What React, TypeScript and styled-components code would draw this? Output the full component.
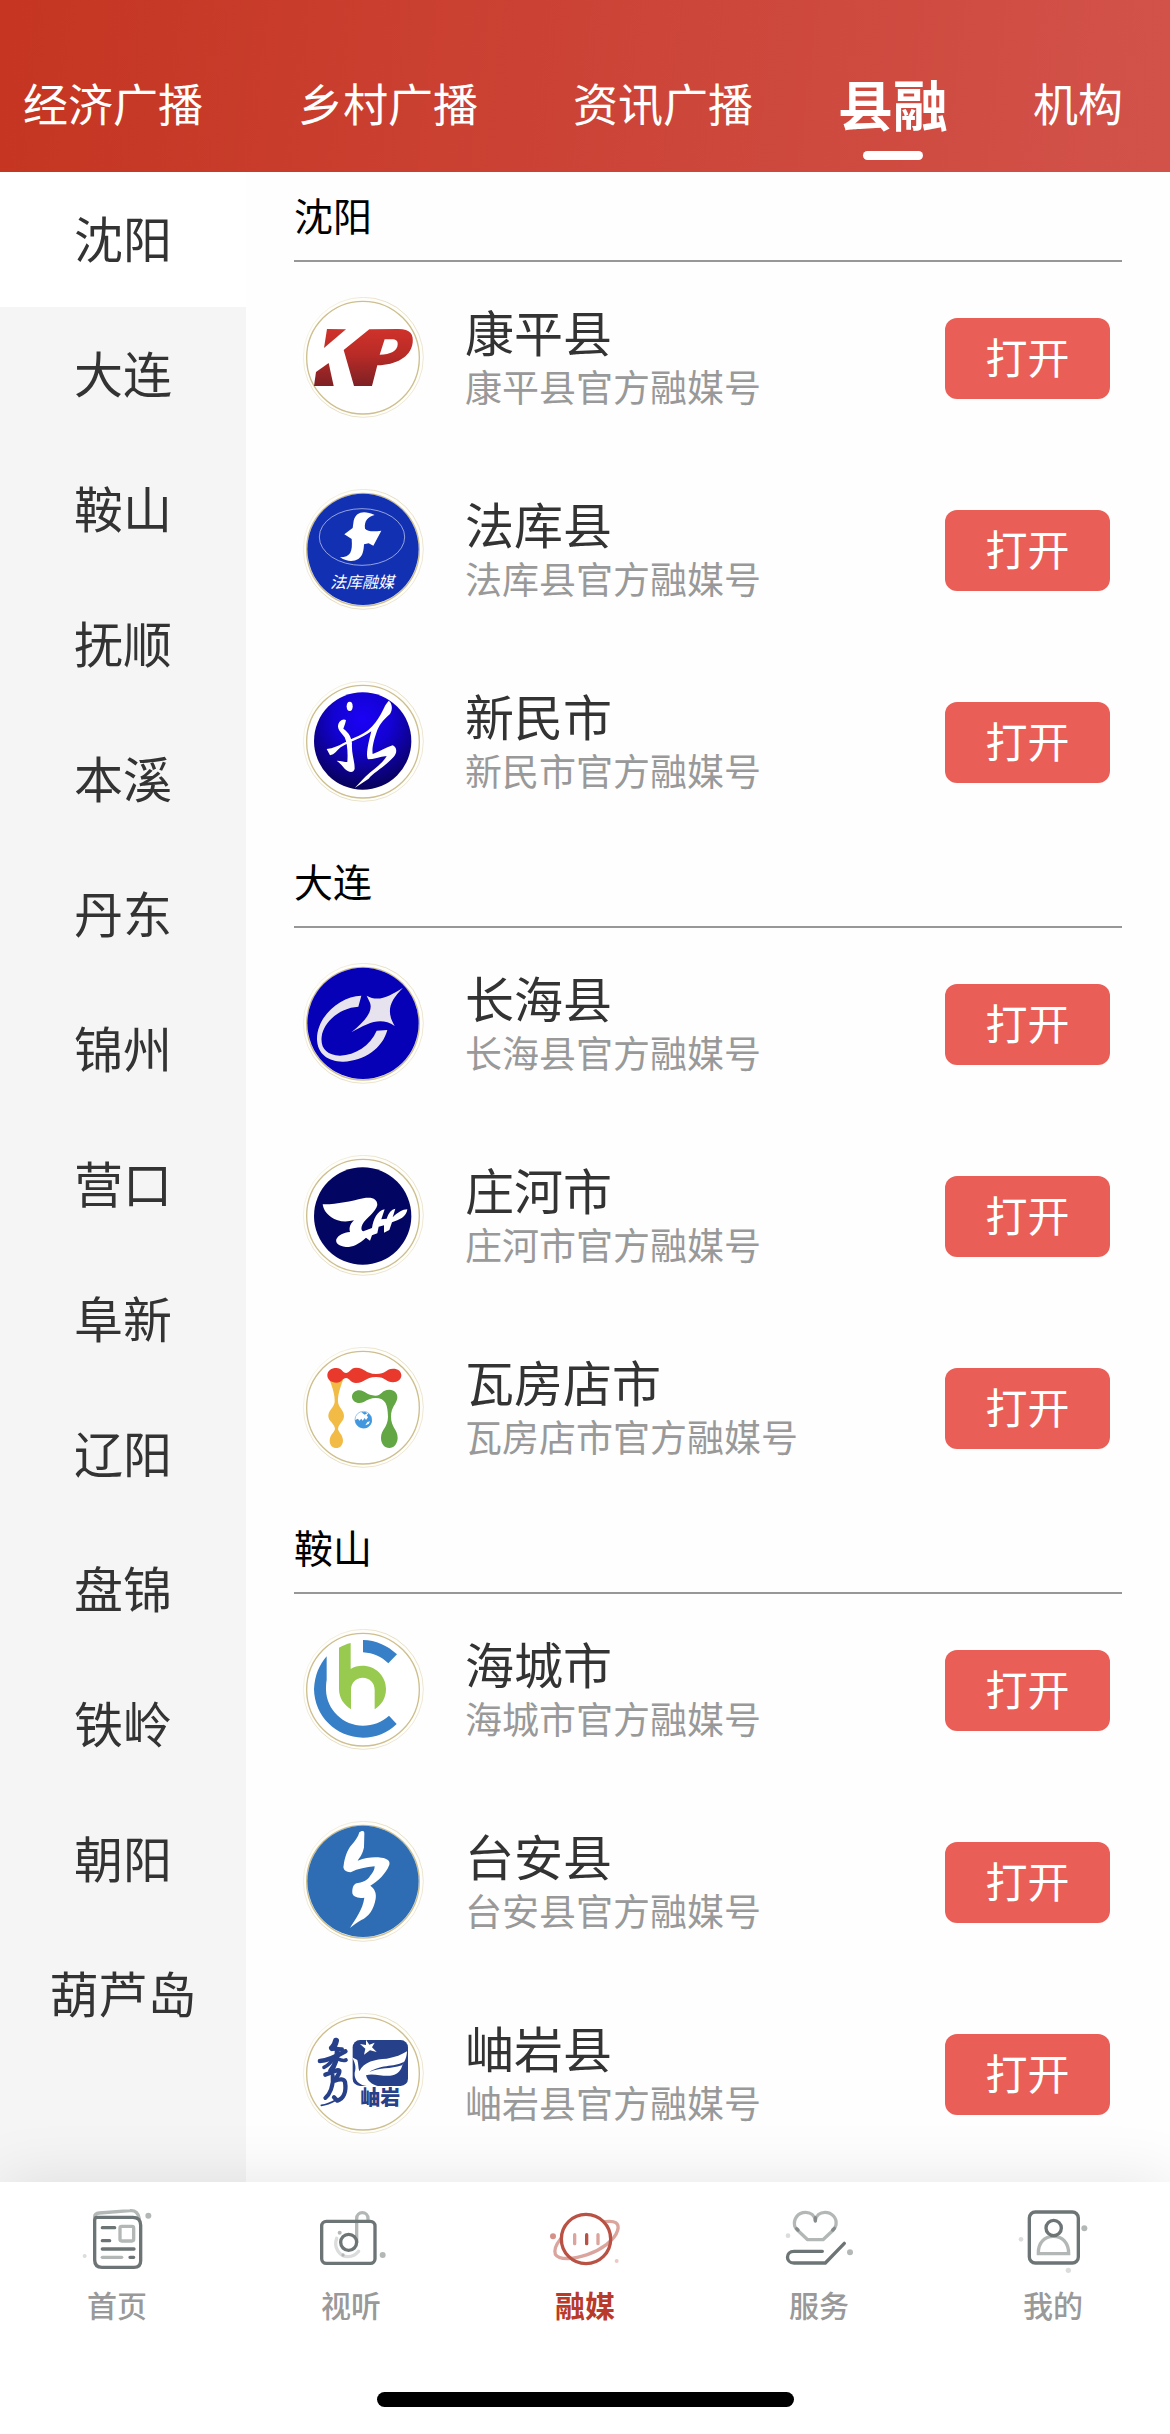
import React, { useState } from "react";
import styled, { createGlobalStyle, css } from "styled-components";

const GlobalStyle = createGlobalStyle`
  *, *::before, *::after { box-sizing: border-box; }
  body {
    margin: 0;
    background: #fefefe;
    color: #333;
    font-family: "Liberation Sans", "Noto Sans CJK SC", sans-serif;
  }
  button {
    margin: 0;
    padding: 0;
    border: 0;
    background: none;
    color: inherit;
    font: inherit;
    cursor: pointer;
  }
  ul { margin: 0; padding: 0; list-style: none; }
`;

const Screen = styled.div`
  display: flex;
  flex-direction: column;
  min-height: 100vh;
`;

const Header = styled.header`
  padding: 78px 23px 12px;
  background: linear-gradient(97deg, #c53521 0%, #cb4234 45%, #d2524a 100%);
`;

const TabList = styled.nav`
  display: flex;
  align-items: flex-start;
  gap: 95px;
  color: #fff;
`;

const Tab = styled.button<{ $active: boolean }>`
  display: flex;
  flex: none;
  flex-direction: column;
  align-items: center;
  height: 82px;
  font-size: 45px;
  line-height: 58px;
  white-space: nowrap;

  ${({ $active }) =>
    $active &&
    css`
      margin: 0 -10px;
      font-size: 55px;
      font-weight: 700;

      &::after {
        content: "";
        width: 60px;
        height: 9px;
        margin-top: 15px;
        border-radius: 5px;
        background: #fff;
      }
    `}
`;

const Body = styled.div`
  display: flex;
  flex: 1;
`;

const Sidebar = styled.nav`
  flex: none;
  width: 246px;
  background: #f5f5f5;
`;

const CityButton = styled.button<{ $active: boolean }>`
  display: block;
  width: 100%;
  height: 135px;
  padding-top: 2px;
  background: ${({ $active }) => ($active ? "#fff" : "transparent")};
  font-size: 49px;
  line-height: 56px;
  text-align: center;
`;

const Main = styled.main`
  flex: 1;
  min-width: 0;
  padding: 0 48px 12px;
`;

const SectionTitle = styled.h2`
  height: 90px;
  margin: 0;
  border-bottom: 2px solid #979797;
  color: #000;
  font-size: 39px;
  font-weight: 400;
  line-height: 92px;
`;

const Row = styled.li`
  display: flex;
  align-items: center;
  height: 192px;
  padding: 0 12px 0 8px;
`;

const Avatar = styled.svg`
  flex: none;
  width: 122px;
  height: 122px;
  margin-right: 41px;
`;

const RowText = styled.div`
  flex: 1;
  min-width: 0;
  padding-top: 8px;
`;

const Name = styled.div`
  font-size: 49px;
  line-height: 56px;
`;

const Description = styled.div`
  color: #999;
  font-size: 37px;
  line-height: 54px;
`;

const OpenButton = styled.button`
  flex: none;
  width: 165px;
  height: 81px;
  padding-top: 4px;
  border-radius: 12px;
  background: #e95f58;
  color: #fff;
  font-size: 42px;
  line-height: 56px;
`;

const BottomBar = styled.footer`
  position: relative;
  display: flex;
  flex-direction: column;
  align-items: center;
  padding: 8px 0 27px;
  background: #fff;
  box-shadow: 0 0 60px rgba(0, 0, 0, 0.1);
`;

const BottomNav = styled.nav`
  display: grid;
  grid-template-columns: repeat(5, 1fr);
  width: 100%;
`;

const NavButton = styled.button<{ $active: boolean }>`
  display: flex;
  flex-direction: column;
  align-items: center;
  gap: 9px;
  color: ${({ $active }) => ($active ? "#b93a28" : "#999")};
  font-size: 30px;
  font-weight: ${({ $active }) => ($active ? 700 : 500)};
  line-height: 36px;
`;

const NavIcon = styled.svg`
  width: 90px;
  height: 90px;
  fill: none;
  stroke-linecap: round;
  stroke-linejoin: round;
`;

const HomeIndicator = styled.div`
  width: 417px;
  height: 15px;
  margin-top: 67px;
  border-radius: 8px;
  background: #000;
`;

/* ---------- County logos ---------- */

type Art = { top: number; art: React.ReactNode };

const logos: Record<string, Art> = {
  康平县: {
    top: 51,
    art: (
      <>
        <linearGradient id="kp" gradientUnits="userSpaceOnUse" x1="0" y1="147" x2="0" y2="318">
          <stop offset="0" stopColor="#cf322a" />
          <stop offset="0.45" stopColor="#b92b27" />
          <stop offset="1" stopColor="#7d2024" />
        </linearGradient>
        <g fill="url(#kp)" fillRule="evenodd">
          <path d="M111 147L168 148L102 204Z" />
          <path d="M116 249L131 318H72L78 276Z" />
          <path d="M161 210L238 148L325 147C362 147 371 164 368 188C362 232 318 254 262 256L246 318H192ZM284 178L269 224C302 224 322 211 323 194C324 182 318 178 305 178Z" />
        </g>
      </>
    ),
  },
  法库县: {
    top: 627,
    art: (
      <>
        <circle cx="219" cy="808" r="167" fill="#1230b2" />
        <ellipse cx="216" cy="771" rx="128" ry="85" fill="none" stroke="#d5dcf6" strokeWidth="2" />
        <path
          fill="#fff"
          d="M254 705C222 690 198 695 191 722L188 744L163 763L185 777C188 815 182 832 150 832C172 846 191 845 205 837C220 827 221 808 222 793L236 790L250 797L274 752C250 755 234 755 225 746C222 722 234 710 254 705Z"
        />
        <text
          x="216"
          y="924"
          textAnchor="middle"
          fill="#fff"
          fontSize="48"
          fontStyle="italic"
          fontFamily="Liberation Sans, Noto Sans CJK SC, sans-serif"
        >
          法库融媒
        </text>
      </>
    ),
  },
  新民市: {
    top: 63,
    art: (
      <>
        <radialGradient id="xm" cx="0.5" cy="0.28" r="0.75">
          <stop offset="0" stopColor="#1c02f6" />
          <stop offset="0.4" stopColor="#1302d2" />
          <stop offset="1" stopColor="#07014e" />
        </radialGradient>
        <circle cx="218" cy="243" r="146" fill="url(#xm)" />
        <g fill="#fff">
          <ellipse cx="179" cy="139" rx="9" ry="14" />
          <path d="M144 200C144 184 158 174 168 180C166 192 162 200 160 206C177 218 184 232 186 250C184 282 194 300 194 326C190 342 174 336 164 326C156 316 148 308 140 302C154 302 164 306 172 306C174 278 172 250 164 232C158 222 146 214 144 200Z" />
          <path d="M110 267C150 262 170 240 205 228C250 210 270 170 286 136L296 122C308 130 308 150 300 162C284 176 272 188 262 210C248 250 246 268 248 282C270 274 290 262 308 256C322 262 322 280 310 292C282 322 250 338 236 356L194 384L226 350C250 328 276 312 290 288C270 290 250 298 234 298C226 286 236 246 244 214C214 236 180 244 152 262C140 272 134 284 120 286Z" />
        </g>
      </>
    ),
  },
  长海县: {
    top: 69,
    art: (
      <>
        <circle cx="219" cy="250" r="167" fill="#0600b6" />
        <g fill="#e7e3ee">
          <path d="M214 167C150 168 80 230 81 298C82 342 115 366 160 365C222 363 278 325 292 270L260 272C240 318 196 345 150 347C110 346 91 325 95 290C101 245 150 203 205 200Z" />
          <path d="M230 167C266 188 298 168 339 143C298 184 288 214 314 258C272 230 236 248 184 277C222 246 250 216 240 188Z" />
        </g>
      </>
    ),
  },
  庄河市: {
    top: 645,
    art: (
      <>
        <circle cx="218" cy="828" r="146" fill="#030563" />
        <path
          fill="#fff"
          d="M98 793C140 794 180 784 220 775C248 770 262 778 262 795C258 816 228 834 218 852C212 864 214 872 220 874L246 864C250 838 262 812 284 808L274 838L290 836C296 818 304 808 316 806L308 832C322 818 338 808 352 808C350 830 328 840 306 847L298 870L282 878L282 856L266 860L262 880L246 886L240 902L228 893C206 914 184 922 168 921C144 918 136 908 139 898C146 884 160 878 180 876C176 862 182 850 192 841C166 848 140 844 124 832C108 820 100 808 98 793Z"
        />
      </>
    ),
  },
  瓦房店市: {
    top: 81,
    art: (
      <>
        <g fill="#f2bb45">
          <path d="M119 180H159C150 205 143 225 144 245C145 262 162 270 162 288C162 304 148 308 144 326C146 338 159 344 159 362C158 376 150 384 139 384C128 384 119 376 119 362C119 344 133 338 135 326C132 308 115 304 115 288C115 270 133 262 134 245C135 225 128 205 119 180Z" />
        </g>
        <g fill="#e8392c">
          <path d="M112 166C112 152 124 144 139 144C156 144 158 159 168 159C178 159 182 143 198 143C226 144 224 160 258 162C288 162 288 146 309 146C324 146 334 154 334 166C334 178 324 187 309 187C288 187 288 171 258 171C224 172 226 188 198 189C182 189 178 174 168 174C158 174 156 188 139 188C124 188 112 180 112 166Z" />
        </g>
        <g fill="#62a744">
          <path d="M186 230C186 219 196 211 208 211C226 212 230 227 256 227C276 226 274 209 298 209C314 210 323 220 322 234C320 252 303 260 303 290C303 322 323 328 323 354C322 372 312 384 298 384C284 384 273 372 273 354C273 328 294 322 294 290C293 256 288 234 256 234C230 235 226 249 208 249C196 249 186 241 186 230Z" />
        </g>
        <circle cx="220" cy="299" r="25" fill="#fff" stroke="#63aee8" strokeWidth="2" />
        <path
          fill="#4298df"
          d="M195 300L204 296L208 302L214 296L218 302L224 294L228 300L234 292L230 286L236 280L244 290L246 302C244 316 234 325 220 325C206 324 196 314 195 300ZM214 277L226 276L232 280L224 284Z"
        />
        <path fill="#fff" d="M232 306L240 304L236 312L226 316Z" />
      </>
    ),
  },
  海城市: {
    top: 87,
    art: (
      <>
        <g fill="#3780c8">
          <path d="M219 120C258 121 292 136 321 163L295 190C274 170 250 159 219 157Z" />
          <path d="M110 169V240C108 250 108 262 108 270C110 330 160 377 219 377C248 377 276 366 297 347L320 372C292 399 258 413 219 413C138 412 73 348 72 267C74 226 88 194 110 169Z" />
        </g>
        <path
          fill="#98ca50"
          d="M147 143C158 137 170 132 182 129V207C192 200 204 197 217 197C257 197 288 228 288 267C288 294 275 315 254 328V270C254 248 239 233 218 233C198 233 183 248 183 270V328C162 315 147 294 147 267Z"
        />
      </>
    ),
  },
  台安县: {
    top: 663,
    art: (
      <>
        <circle cx="219" cy="844" r="167" fill="#2e6db3" />
        <path
          fill="#fff"
          d="M208 697C218 690 224 692 223 702L222 742C218 762 210 772 203 782C230 772 252 770 274 773C294 775 301 784 298 794C288 822 262 844 241 857C254 866 260 880 257 896C252 928 236 950 214 960C200 968 190 976 180 984C196 956 218 930 223 893C202 896 190 890 187 880C186 860 192 850 204 849C226 846 236 836 240 828C250 816 254 808 254 799C228 801 204 806 182 817C164 816 158 806 161 796C164 772 172 750 184 736C196 722 204 712 208 697Z"
        />
      </>
    ),
  },
  岫岩县: {
    top: 99,
    art: (
      <>
        <g fill="none" stroke="#27408a" strokeLinecap="round" strokeLinejoin="round">
          <path strokeWidth="18" d="M138 182C136 192 132 200 126 204" />
          <path strokeWidth="12" d="M126 206L156 208" />
          <path strokeWidth="14" d="M90 243C112 243 138 230 166 214" />
          <path strokeWidth="15" d="M142 208C142 232 136 256 122 272" />
          <path strokeWidth="11" d="M130 236C122 250 114 256 102 262M142 236C150 240 160 244 168 240" />
          <path strokeWidth="13" d="M106 284C128 278 142 266 148 272C150 284 138 290 134 302C150 296 162 296 165 306C170 336 160 356 142 362L132 352" />
          <path strokeWidth="12" d="M128 286C132 318 118 344 106 354" />
          <path strokeWidth="5" d="M94 376C112 374 124 368 138 360" />
        </g>
        <rect x="188" y="180" width="166" height="138" rx="22" fill="#27408a" />
        <g fill="#fff">
          <path d="M228 179L238 194L254 188L246 202L260 216L240 211L222 224L226 206L210 192L228 195Z" />
          <path d="M186 232L202 240C206 252 204 262 208 274C222 244 256 238 290 236C316 232 336 224 351 214C350 232 346 242 338 252C334 272 322 282 308 286C282 292 250 278 228 286C232 302 244 314 266 319H236C206 316 192 300 194 278C200 262 194 246 186 232Z" />
        </g>
        <path fill="#27408a" d="M344 244C320 262 276 252 238 276C270 262 300 268 336 256Z" />
        <text
          x="271"
          y="375"
          textAnchor="middle"
          fill="#27408a"
          fontSize="60"
          fontWeight="900"
          fontFamily="Liberation Sans, Noto Sans CJK SC, sans-serif"
        >
          岫岩
        </text>
      </>
    ),
  },
};

function CountyLogo({ name }: { name: string }) {
  const { top, art } = logos[name];
  const cy = top + 181;
  return (
    <Avatar viewBox={`36 ${top} 366 366`} aria-hidden="true">
      <linearGradient id={`rim-${top}`} x1="0" y1="0.2" x2="1" y2="0.8">
        <stop offset="0" stopColor="#d9cda4" stopOpacity="0.25" />
        <stop offset="0.5" stopColor="#d9cda4" />
        <stop offset="1" stopColor="#d9cda4" stopOpacity="0.6" />
      </linearGradient>
      <circle cx="220" cy={cy} r="180" fill="#fffefa" stroke={`url(#rim-${top})`} strokeWidth="2" />
      <circle cx="219" cy={cy + 1} r="169" fill="#fff" stroke="#cdbf8f" strokeWidth="4" />
      {art}
    </Avatar>
  );
}

/* ---------- Bottom navigation icons ---------- */

const DARK = "#6d7475";
const LIGHT = "#b3b8b7";
const PALE = "#dadddc";

const HomeIcon = () => (
  <NavIcon viewBox="6 0 270 270" strokeWidth="10" aria-hidden="true">
    <path stroke={LIGHT} d="M74 80C74 72 80 70 88 69L180 62C196 60 206 70 208 86" />
    <path stroke={DARK} d="M82 82H188C204 82 212 90 212 106V212C212 226 206 232 192 232H96C82 232 74 224 74 210V90C74 85 77 82 82 82Z" />
    <rect x="150" y="109" width="41" height="44" rx="5" stroke={LIGHT} />
    <path stroke={DARK} d="M97 113H134M97 152H119M97 177H192M180 202H191" />
    <path stroke={LIGHT} d="M97 202H155" />
    <circle cx="235" cy="77" r="9" fill={LIGHT} />
    <circle cx="44" cy="198" r="6" fill={PALE} />
  </NavIcon>
);

const MediaIcon = () => (
  <NavIcon viewBox="708 0 270 270" strokeWidth="10" aria-hidden="true">
    <path stroke={PALE} d="M800 145C790 172 808 200 834 200C848 200 858 194 866 184" />
    <path stroke={LIGHT} d="M860 156V86C860 62 894 62 894 86V92" />
    <rect x="755" y="94" width="160" height="126" rx="14" stroke={DARK} />
    <circle cx="836" cy="157" r="24" stroke={DARK} />
    <circle cx="809" cy="128" r="6" fill={LIGHT} />
    <circle cx="819" cy="195" r="5" fill={LIGHT} />
    <circle cx="938" cy="195" r="9" fill={LIGHT} />
  </NavIcon>
);

const FusionIcon = () => (
  <NavIcon viewBox="0 0 270 270" strokeWidth="10" aria-hidden="true">
    <path
      stroke="#dba59e"
      d="M196 95C224 91 239 98 233 121C224 152 182 180 142 194C104 207 58 212 46 193C41 178 50 161 62 146"
    />
    <circle cx="138" cy="147" r="74" stroke="#b95244" />
    <path stroke="#dba59e" d="M104 134V161M174 134V161" />
    <path stroke="#b95244" d="M140 134V161" />
    <circle cx="39" cy="139" r="9" fill="#d59088" />
    <circle cx="230" cy="213" r="6" fill="#ebc9c6" />
  </NavIcon>
);

const ServiceIcon = () => (
  <NavIcon viewBox="702 0 270 270" strokeWidth="10" aria-hidden="true">
    <path
      stroke={LIGHT}
      d="M826 92C824 76 812 67 797 67C772 67 760 88 764 108C766 114 768 116 772 120L803 149H849L880 120C884 115 887 110 888 104C891 84 876 67 855 67C840 67 828 76 826 92Z"
    />
    <path stroke="#858b8b" d="M826 83V93M770 116L774 120M878 120L883 115" />
    <path stroke={DARK} d="M847 184H762C736 184 736 219 762 219H856L913 160" />
    <circle cx="744" cy="137" r="7" fill={PALE} />
    <circle cx="930" cy="187" r="9" fill={LIGHT} />
  </NavIcon>
);

const ProfileIcon = () => (
  <NavIcon viewBox="234 510 270 270" strokeWidth="10" aria-hidden="true">
    <rect x="298" y="576" width="147" height="153" rx="18" stroke={DARK} />
    <path stroke={LIGHT} strokeLinejoin="miter" d="M325 701C324 668 344 649 370 649C397 649 416 668 416 701Z" />
    <circle cx="371" cy="624" r="23" stroke={DARK} />
    <circle cx="463" cy="625" r="9" fill={LIGHT} />
    <circle cx="273" cy="658" r="7" fill={PALE} />
    <circle cx="415" cy="751" r="8" fill={PALE} />
  </NavIcon>
);

/* ---------- Data ---------- */

const channels = ["经济广播", "乡村广播", "资讯广播", "县融", "机构"];

const cities = [
  "沈阳", "大连", "鞍山", "抚顺", "本溪", "丹东", "锦州",
  "营口", "阜新", "辽阳", "盘锦", "铁岭", "朝阳", "葫芦岛",
];

const sections = [
  { city: "沈阳", counties: ["康平县", "法库县", "新民市"] },
  { city: "大连", counties: ["长海县", "庄河市", "瓦房店市"] },
  { city: "鞍山", counties: ["海城市", "台安县", "岫岩县"] },
];

const destinations = [
  { label: "首页", Icon: HomeIcon },
  { label: "视听", Icon: MediaIcon },
  { label: "融媒", Icon: FusionIcon },
  { label: "服务", Icon: ServiceIcon },
  { label: "我的", Icon: ProfileIcon },
];

export default function App() {
  const [channel, setChannel] = useState("县融");
  const [city, setCity] = useState("沈阳");
  const [destination, setDestination] = useState("融媒");

  return (
    <Screen>
      <GlobalStyle />
      <Header>
        <TabList>
          {channels.map((name) => (
            <Tab key={name} type="button" $active={name === channel} onClick={() => setChannel(name)}>
              {name}
            </Tab>
          ))}
        </TabList>
      </Header>

      <Body>
        <Sidebar>
          <ul>
            {cities.map((name) => (
              <li key={name}>
                <CityButton type="button" $active={name === city} onClick={() => setCity(name)}>
                  {name}
                </CityButton>
              </li>
            ))}
          </ul>
        </Sidebar>

        <Main>
          {sections.map((section) => (
            <section key={section.city}>
              <SectionTitle>{section.city}</SectionTitle>
              <ul>
                {section.counties.map((name) => (
                  <Row key={name}>
                    <CountyLogo name={name} />
                    <RowText>
                      <Name>{name}</Name>
                      <Description>{name}官方融媒号</Description>
                    </RowText>
                    <OpenButton type="button">打开</OpenButton>
                  </Row>
                ))}
              </ul>
            </section>
          ))}
        </Main>
      </Body>

      <BottomBar>
        <BottomNav>
          {destinations.map(({ label, Icon }) => (
            <NavButton
              key={label}
              type="button"
              $active={label === destination}
              onClick={() => setDestination(label)}
            >
              <Icon />
              {label}
            </NavButton>
          ))}
        </BottomNav>
        <HomeIndicator />
      </BottomBar>
    </Screen>
  );
}
